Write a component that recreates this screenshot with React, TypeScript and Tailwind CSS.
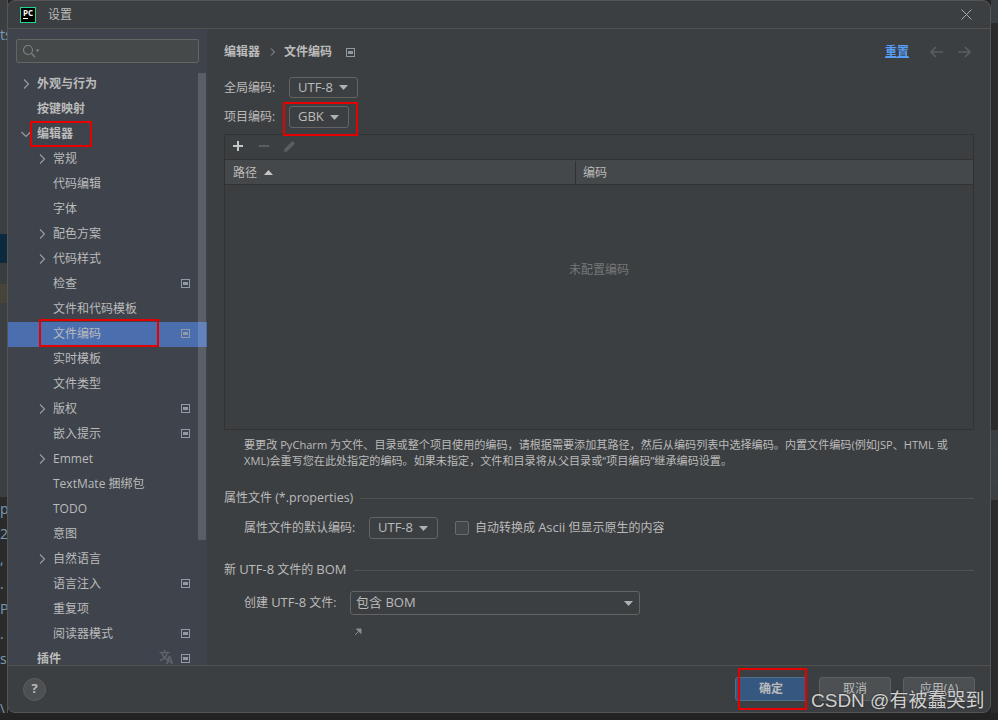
import React from "react";

const FONT = "font-['Open_Sans','Noto_Sans_CJK_SC',sans-serif]";

type TreeRow = {
  label: string;
  level: 0 | 1;
  arrow?: "right" | "down";
  bold?: boolean;
  scoped?: boolean;
  translate?: boolean;
  selected?: boolean;
};

const treeRows: TreeRow[] = [
  { label: "外观与行为", level: 0, arrow: "right", bold: true },
  { label: "按键映射", level: 0, bold: true },
  { label: "编辑器", level: 0, arrow: "down", bold: true },
  { label: "常规", level: 1, arrow: "right" },
  { label: "代码编辑", level: 1 },
  { label: "字体", level: 1 },
  { label: "配色方案", level: 1, arrow: "right" },
  { label: "代码样式", level: 1, arrow: "right" },
  { label: "检查", level: 1, scoped: true },
  { label: "文件和代码模板", level: 1 },
  { label: "文件编码", level: 1, scoped: true, selected: true },
  { label: "实时模板", level: 1 },
  { label: "文件类型", level: 1 },
  { label: "版权", level: 1, arrow: "right", scoped: true },
  { label: "嵌入提示", level: 1, scoped: true },
  { label: "Emmet", level: 1, arrow: "right" },
  { label: "TextMate 捆绑包", level: 1 },
  { label: "TODO", level: 1 },
  { label: "意图", level: 1 },
  { label: "自然语言", level: 1, arrow: "right" },
  { label: "语言注入", level: 1, scoped: true },
  { label: "重复项", level: 1 },
  { label: "阅读器模式", level: 1, scoped: true },
  { label: "插件", level: 0, bold: true, scoped: true, translate: true },
];

function ScopeIcon({ className = "" }: { className?: string }) {
  return (
    <svg width="9" height="9" viewBox="0 0 9 9" className={className}>
      <rect x="0.5" y="0.5" width="8" height="8" fill="none" stroke="#8f9aa3" />
      <rect x="2" y="3" width="5" height="3" fill="#8f9aa3" />
    </svg>
  );
}

function Chevron({ dir }: { dir: "right" | "down" }) {
  return (
    <svg width="10" height="10" viewBox="0 0 10 10">
      <path
        d={dir === "right" ? "M3 0.5 L7.5 5 L3 9.5" : "M0.5 3 L5 7.5 L9.5 3"}
        fill="none"
        stroke="#9a9c9e"
        strokeWidth="1.2"
      />
    </svg>
  );
}

function Caret() {
  return (
    <svg width="9" height="5" viewBox="0 0 9 5" className="shrink-0">
      <path d="M0 0 H9 L4.5 5 Z" fill="#aeb0b2" />
    </svg>
  );
}

function Combo({ text, className = "" }: { text: string; className?: string }) {
  return (
    <div
      className={`flex items-center justify-between rounded-[3px] border border-[#646464] bg-[#3c3f41] pl-[8px] pr-[9px] text-[13px] text-[#bbbbbb] ${className}`}
    >
      <span>{text}</span>
      <Caret />
    </div>
  );
}

function SectionTitle({ children, className = "" }: { children: React.ReactNode; className?: string }) {
  return (
    <div className={`flex items-center gap-[7px] text-[12px] text-[#bbbbbb] ${className}`}>
      <span className="whitespace-nowrap">{children}</span>
      <div className="h-px flex-1 bg-[#515151]" />
    </div>
  );
}

function Tree() {
  return (
    <div className="mt-[9px] flex-1 overflow-hidden">
      {treeRows.map((row) => (
        <div
          key={row.label}
          className={`relative flex h-[25px] items-center pb-[2px] text-[12px] text-[#bbbbbb] ${
            row.selected ? "bg-[#4b6eaf]" : ""
          } ${row.level === 0 ? "pl-[13px]" : "pl-[29px]"}`}
        >
          <span className="flex w-[16px] shrink-0 justify-start">
            {row.arrow ? <Chevron dir={row.arrow} /> : null}
          </span>
          <span className={`whitespace-nowrap ${row.bold ? "font-bold" : ""}`}>{row.label}</span>
          {row.translate ? (
            <span className="absolute left-[151px] top-[2px] text-[11px] font-bold leading-[14px] text-[#5f6469]">
              文
              <span className="absolute left-[7px] top-[5px] text-[10px] leading-[12px]">A</span>
            </span>
          ) : null}
          {row.scoped ? <ScopeIcon className="absolute left-[173px] top-[7px]" /> : null}
        </div>
      ))}
    </div>
  );
}

function Sidebar() {
  return (
    <div className="relative flex w-[199px] shrink-0 flex-col bg-[#3e434c]">
      <div className="mx-[8px] mt-[10px] flex h-[24px] w-[183px] shrink-0 items-center rounded-[2px] border border-[#646464] bg-[#45494a] pl-[5px]">
        <svg width="18" height="14" viewBox="0 0 18 14">
          <circle cx="6" cy="6" r="4.5" fill="none" stroke="#7f8386" strokeWidth="1.1" />
          <path d="M9.5 9.5 L13 13" stroke="#7f8386" strokeWidth="1.3" />
          <path d="M13.5 5.5 H17.5 L15.5 8 Z" fill="#7f8386" />
        </svg>
      </div>
      <Tree />
      {/* scrollbar thumb */}
      <div className="absolute left-[190px] top-[44px] h-[467px] w-[8px] bg-[#ffffff]/15" />
    </div>
  );
}

function EncodingTable() {
  return (
    <div className="mt-[6px] flex h-[296px] flex-col border border-[#323232]">
      <div className="flex h-[25px] shrink-0 items-center gap-[12px] border-b border-[#323232] pb-[2px] pl-[7px]">
        <svg width="12" height="12" viewBox="0 0 12 12">
          <path d="M6 1 V11 M1 6 H11" stroke="#c4c6c8" strokeWidth="2" />
        </svg>
        <svg width="12" height="12" viewBox="0 0 12 12" className="ml-[2px]">
          <path d="M1 6 H11" stroke="#5c5f61" strokeWidth="2" />
        </svg>
        <svg width="14" height="14" viewBox="0 0 14 14" className="ml-[1px]">
          <path d="M1 13 L1.5 10 L9.5 2 L12 4.5 L4 12.5 Z" fill="#5c5f61" />
        </svg>
      </div>
      <div className="flex h-[25px] shrink-0 items-center border-b border-[#323232] bg-[#45484a] pt-[1px] text-[12px] text-[#bbbbbb]">
        <div className="flex h-full w-[351px] items-center gap-[7px] border-r border-[#323232] pl-[8px]">
          <span>路径</span>
          <svg width="9" height="5" viewBox="0 0 9 5">
            <path d="M0 5 H9 L4.5 0 Z" fill="#c4c6c8" />
          </svg>
        </div>
        <span className="pl-[7px]">编码</span>
      </div>
      <div className="flex flex-1 items-center justify-center pb-[74px] text-[12px] text-[#75787a]">
        未配置编码
      </div>
    </div>
  );
}

function SettingsPanel() {
  return (
    <div className="flex min-w-0 flex-1 flex-col pl-[17px] pr-[16px] pt-[13px]">
      <div className="flex h-[20px] items-center text-[12px] text-[#bbbbbb]">
        <span className="font-bold">编辑器</span>
        <svg width="6" height="8" viewBox="0 0 6 8" className="ml-[10px]">
          <path d="M1 0.5 L4.5 4 L1 7.5" fill="none" stroke="#a0a2a4" />
        </svg>
        <span className="ml-[8px] font-bold">文件编码</span>
        <ScopeIcon className="ml-[14px]" />
        <span className="ml-auto mr-[21px] text-[12px] font-bold text-[#589df6] underline underline-offset-[1px]">重置</span>
        <svg width="14" height="12" viewBox="0 0 14 12">
          <path d="M13 6 H1.5 M6 1 L1 6 L6 11" fill="none" stroke="#5a5d5f" strokeWidth="1.6" />
        </svg>
        <svg width="14" height="12" viewBox="0 0 14 12" className="ml-[13px] mr-[3px]">
          <path d="M1 6 H12.5 M8 1 L13 6 L8 11" fill="none" stroke="#5a5d5f" strokeWidth="1.6" />
        </svg>
      </div>

      <div className="mt-[15px] flex h-[21px] items-center text-[12px] text-[#bbbbbb]">
        <span className="w-[65px]">全局编码:</span>
        <Combo text="UTF-8" className="h-[21px] w-[69px]" />
      </div>
      <div className="mt-[8px] flex h-[22px] items-center text-[12px] text-[#bbbbbb]">
        <span className="w-[65px]">项目编码:</span>
        <Combo text="GBK" className="h-[22px] w-[60px]" />
      </div>

      <EncodingTable />

      <div className="mt-[7px] whitespace-nowrap pl-[20px] text-[11.1px] leading-[16px] text-[#bbbbbb]">
        要更改 PyCharm 为文件、目录或整个项目使用的编码，请根据需要添加其路径，然后从编码列表中选择编码。内置文件编码(例如JSP、HTML 或
        <br />
        XML)会重写您在此处指定的编码。如果未指定，文件和目录将从父目录或“项目编码”继承编码设置。
      </div>

      <SectionTitle className="mt-[19px] h-[20px]">
        属性文件 <span className="text-[12.5px]">(*.properties)</span>
      </SectionTitle>
      <div className="mt-[9px] flex h-[22px] items-center pl-[20px] text-[12px] text-[#bbbbbb]">
        <span className="w-[125px] whitespace-nowrap">属性文件的默认编码:</span>
        <Combo text="UTF-8" className="h-[22px] w-[69px]" />
        <div className="ml-[17px] h-[14px] w-[14px] rounded-[2px] border border-[#6b6b6b] bg-[#43494a]" />
        <span className="ml-[6px]">
          自动转换成 <span className="text-[13px]">Ascii</span> 但显示原生的内容
        </span>
      </div>

      <SectionTitle className="mt-[21px] h-[20px]">
        新 <span className="text-[13px]">UTF-8</span> 文件的 <span className="text-[13px]">BOM</span>
      </SectionTitle>
      <div className="mt-[11px] flex h-[24px] items-center pl-[20px] text-[12px] text-[#bbbbbb]">
        <span className="w-[106px] whitespace-nowrap">
          创建 <span className="text-[13px]">UTF-8</span> 文件:
        </span>
        <Combo text="包含 BOM" className="h-[24px] w-[290px] !pl-[5px] !pr-[6px]" />
      </div>
      <svg width="8" height="8" viewBox="0 0 8 8" className="ml-[130px] mt-[13px]">
        <path d="M1 7 L6 2 M2.5 1 H7 V5.5 Z" stroke="#8a8d8f" fill="#8a8d8f" />
      </svg>
    </div>
  );
}

function FooterButton({ label, primary }: { label: string; primary?: boolean }) {
  return (
    <div
      className={`flex h-[24px] w-[72px] items-center justify-center rounded-[3px] border text-[12px] text-[#bbbbbb] ${
        primary ? "border-[#4c708c] bg-[#365880] font-bold" : "border-[#5e6060] bg-[#4c5052]"
      }`}
    >
      {label}
    </div>
  );
}

// Window content strips visible behind the dialog.
const leftStrip: { h: number; c: string; t?: string }[] = [
  { h: 23, c: "#3b3e40" },
  { h: 211, c: "#3c3f41", t: "ts" },
  { h: 29, c: "#0d293e" },
  { h: 21, c: "#3a3d3f" },
  { h: 19, c: "#47443a" },
  { h: 139, c: "#3c3f41" },
  { h: 46, c: "#3c3f41" },
  { h: 9, c: "#3c3f41" },
  { h: 25, c: "#2b2b2b", t: "p" },
  { h: 25, c: "#2b2b2b", t: "2" },
  { h: 25, c: "#2b2b2b", t: "," },
  { h: 25, c: "#2b2b2b", t: "." },
  { h: 25, c: "#2b2b2b", t: "P" },
  { h: 25, c: "#2b2b2b", t: "." },
  { h: 25, c: "#2b2b2b", t: "s" },
  { h: 25, c: "#2b2b2b" },
  { h: 25, c: "#2b2b2b", t: "\\" },
];

export default function App() {
  return (
    <div className={`relative flex h-[720px] w-[998px] justify-between overflow-hidden bg-[#232323] ${FONT}`}>
      <div className="flex h-[713px] w-[8px] flex-col overflow-hidden border-r border-[#555555]">
        {leftStrip.map((s, i) => (
          <div
            key={i}
            className="shrink-0 overflow-hidden pt-[3px] text-[14px] leading-[18px] text-[#7a9bb5]"
            style={{ height: s.h, backgroundColor: s.c }}
          >
            {s.t}
          </div>
        ))}
      </div>
      <div className="flex h-[713px] w-[7px] flex-col">
        <div className="h-[23px] bg-[#3c3f41]" />
        <div className="h-[407px] bg-[#2b2b2b]" />
        <div className="h-[25px] border-b border-[#3f4244] bg-[#3c3f41]" />
        <div className="h-[26px] border-b border-[#3f4244] bg-[#3c3f41]" />
        <div className="h-[19px] bg-[#3c3f41]" />
        <div className="flex-1 bg-[#2b2b2b]" />
      </div>

      {/* settings dialog */}
      <div className="absolute left-[7px] top-0 flex h-[713px] w-[984px] flex-col overflow-hidden rounded-[8px] border border-[#555555] bg-[#3c3f41]">
        <div className="flex h-[28px] shrink-0 items-center border-b border-[#515151] pl-[12px] pr-[18px]">
          <div className="flex h-[16px] w-[16px] flex-col border border-[#21d789] bg-black pl-[2px] text-[8px] font-bold leading-[9px] text-white">
            PC
            <div className="mt-[1px] h-px w-[5px] bg-white" />
          </div>
          <span className="ml-[12px] text-[12px] text-[#bbbbbb]">设置</span>
          <svg width="11" height="11" viewBox="0 0 11 11" className="ml-auto">
            <path d="M0.5 0.5 L10.5 10.5 M10.5 0.5 L0.5 10.5" stroke="#a9abad" strokeWidth="1" />
          </svg>
        </div>

        <div className="flex min-h-0 flex-1">
          <Sidebar />
          <SettingsPanel />
        </div>

        <div className="flex h-[47px] shrink-0 items-center border-t border-[#515151] pl-[15px] pr-[15px]">
          <div className="flex h-[23px] w-[23px] items-center justify-center rounded-full border border-[#5c5f61] bg-[#4c5052] text-[13px] font-bold text-[#bbbbbb]">
            ?
          </div>
          <div className="ml-auto flex gap-[12px]">
            <FooterButton label="确定" primary />
            <FooterButton label="取消" />
            <FooterButton label="应用(A)" />
          </div>
        </div>
      </div>

      {/* red annotation boxes */}
      <div className="absolute left-[30px] top-[121px] h-[26px] w-[62px] border-2 border-[#e60000]" />
      <div className="absolute left-[39px] top-[319px] h-[28px] w-[120px] border-2 border-[#e60000]" />
      <div className="absolute left-[283px] top-[102px] h-[34px] w-[75px] border-2 border-[#e60000]" />
      <div className="absolute left-[738px] top-[668px] h-[42px] w-[69px] border-2 border-[#e60000]" />

      {/* blog watermark */}
      <div className="absolute left-[811px] top-[687px] whitespace-nowrap font-['Liberation_Sans','Noto_Sans_CJK_SC',sans-serif] text-[19px] leading-[28px] text-[#d0d0d0] [text-shadow:0_0_2px_#222]">
        CSDN @有被蠢哭到
      </div>
    </div>
  );
}
